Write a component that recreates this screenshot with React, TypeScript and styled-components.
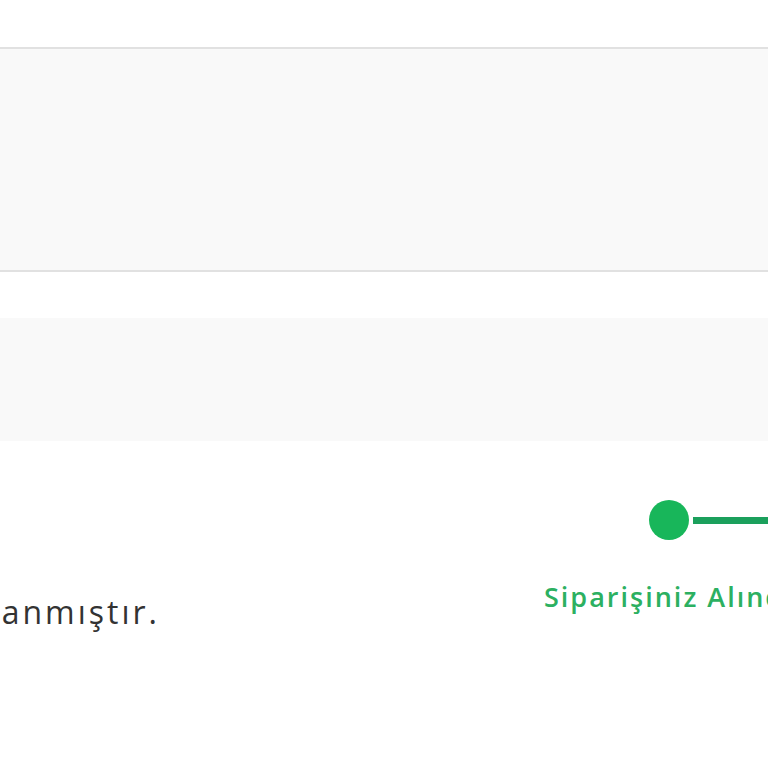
import React from "react";
import styled, { createGlobalStyle } from "styled-components";

const GlobalStyle = createGlobalStyle`
  html, body {
    margin: 0;
    padding: 0;
    background: #ffffff;
    overflow: hidden;
  }
  body {
    font-family: "Open Sans", "Noto Sans", "Liberation Sans", sans-serif;
  }
`;

const Page = styled.div`
  display: flex;
  flex-direction: column;
  width: 768px;
  height: 768px;
  overflow: hidden;
  padding-top: 47px;
  box-sizing: border-box;
`;

const SummaryPanel = styled.section`
  background: #f9f9f9;
  border-top: 2px solid #e1e1e1;
  border-bottom: 2px solid #e1e1e1;
  height: 221px;
  flex-shrink: 0;
`;

const NotePanel = styled.section`
  background: #f9f9f9;
  height: 123px;
  margin-top: 46px;
  flex-shrink: 0;
`;

const StatusSection = styled.section`
  display: flex;
  align-items: flex-start;
  padding-top: 59px;
`;

const MessageCol = styled.div`
  display: flex;
  justify-content: flex-end;
  width: 160px;
  flex-shrink: 0;
  margin-top: 95px;
`;

const Message = styled.p`
  margin: 0;
  white-space: nowrap;
  font-size: 32px;
  line-height: 34px;
  letter-spacing: 3px;
  color: #333333;
`;

const Tracker = styled.div`
  display: flex;
  margin-left: 381px;
  flex-shrink: 0;
`;

const Step = styled.div`
  display: flex;
  flex-direction: column;
  align-items: flex-start;
  width: 260px;
  flex-shrink: 0;
`;

const StepHead = styled.div`
  display: flex;
  align-items: center;
  width: 100%;
  height: 40px;
`;

const Spacer = styled.div`
  flex: 1;
`;

const Dot = styled.span<{ active: boolean }>`
  width: 40px;
  height: 40px;
  border-radius: 50%;
  background: ${p => (p.active ? "#18b65a" : "#d6d6d6")};
  flex-shrink: 0;
`;

const Connector = styled.span<{ active: boolean }>`
  flex: 1;
  height: 7px;
  margin-left: 4px;
  background: ${p => (p.active ? "#1ba05c" : "#d6d6d6")};
`;

const StepLabel = styled.span<{ active: boolean }>`
  margin-top: 40px;
  margin-left: 3px;
  white-space: nowrap;
  font-size: 27px;
  line-height: 34px;
  font-weight: 600;
  letter-spacing: 2px;
  color: ${p => (p.active ? "#2cb061" : "#999999")};
`;

const steps = [
  { label: "Siparişiniz Alındı", active: true },
  { label: "Hazırlanıyor", active: false },
];

const App = () => {
  return (
    <>
      <GlobalStyle />
      <Page>
        <SummaryPanel />
        <NotePanel />
        <StatusSection>
          <MessageCol>
            <Message>Siparişiniz onaylanmıştır.</Message>
          </MessageCol>
          <Tracker>
            {steps.map(s => (
              <Step key={s.label}>
                <StepHead>
                  <Spacer />
                  <Dot active={s.active} />
                  <Connector active={s.active} />
                </StepHead>
                <StepLabel active={s.active}>{s.label}</StepLabel>
              </Step>
            ))}
          </Tracker>
        </StatusSection>
      </Page>
    </>
  );
};

export default App;
